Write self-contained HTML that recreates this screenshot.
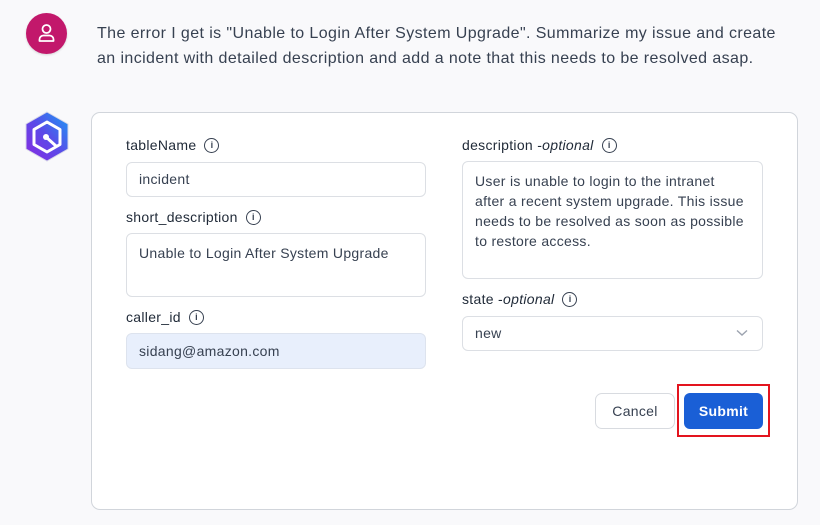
<!DOCTYPE html>
<html><head><style>
*{box-sizing:border-box;margin:0;padding:0}
body{width:820px;height:525px;background:#f9f9fb;font-family:"Liberation Sans",sans-serif;position:relative;overflow:hidden;color:#1f2937;letter-spacing:.3px}
.a{position:absolute}
.lbl{position:absolute;font-size:14px;color:#1f2937;display:flex;align-items:center;height:18px}
.lbl i{font-style:italic}
.info{width:15px;height:15px;border:1.3px solid #374151;border-radius:50%;display:inline-flex;align-items:center;justify-content:center;font-size:9px;font-weight:bold;font-style:normal;color:#374151;margin-left:8px;letter-spacing:0}
.inp{position:absolute;background:#fff;border:1px solid #dcdfe4;border-radius:6px;font-size:14px;color:#374151;padding:0 12px}
</style></head><body>
<div class="a" style="left:26px;top:13px;width:41px;height:41px;border-radius:50%;background:#c2186b;box-shadow:0 1px 2px rgba(0,0,0,.15)">
<svg width="41" height="41" viewBox="0 0 41 41"><circle cx="20.5" cy="16" r="4" fill="none" stroke="#fff" stroke-width="1.8"/><path d="M13.5 28v-1.5a4 4 0 0 1 4-4h6a4 4 0 0 1 4 4V28z" fill="none" stroke="#fff" stroke-width="1.8" stroke-linejoin="round"/></svg></div>
<div class="a" style="left:97px;top:21px;font-size:16px;line-height:25px;color:#374151;width:700px;letter-spacing:.4px">The error I get is "Unable to Login After System Upgrade". Summarize my issue and create<br>an incident with detailed description and add a note that this needs to be resolved asap.</div>
<svg class="a" style="left:22px;top:110px" width="50" height="54" viewBox="0 0 50 54"><defs><linearGradient id="g" x1="1" y1="0" x2="0" y2="1"><stop offset="0" stop-color="#1a9cf5"/><stop offset=".5" stop-color="#5b4ae8"/><stop offset="1" stop-color="#8a2be2"/></linearGradient></defs><path d="M25 2 46 14v25L25 51 4 39V14z" fill="url(#g)" stroke="#d8d8e8" stroke-width="1"/><path d="M25 12 38 19.5v15L25 42 12 34.5v-15z" fill="none" stroke="#fff" stroke-width="3" stroke-linejoin="round"/><circle cx="24" cy="27" r="3" fill="#fff"/><path d="M24 27 34 36" stroke="#fff" stroke-width="3"/></svg>
<div class="a" style="left:91px;top:112px;width:707px;height:398px;background:#fff;border:1px solid #d1d5db;border-radius:9px"></div>
<div class="lbl" style="left:126px;top:136px">tableName<span class="info">i</span></div>
<div class="inp" style="left:126px;top:162px;width:300px;height:35px;line-height:33px">incident</div>
<div class="lbl" style="left:126px;top:208px">short_description<span class="info">i</span></div>
<div class="inp" style="left:126px;top:233px;width:300px;height:64px;padding-top:10px;line-height:18px">Unable to Login After System Upgrade</div>
<div class="lbl" style="left:126px;top:308px">caller_id<span class="info">i</span></div>
<div class="inp" style="left:126px;top:333px;width:300px;height:36px;line-height:34px;background:#e8effc;border-color:#dde3ee">sidang@amazon.com</div>
<div class="lbl" style="left:462px;top:136px">description -<i>optional</i><span class="info">i</span></div>
<div class="inp" style="left:462px;top:161px;width:301px;height:118px;padding-top:9px;line-height:20px">User is unable to login to the intranet<br>after a recent system upgrade. This issue<br>needs to be resolved as soon as possible<br>to restore access.</div>
<div class="lbl" style="left:462px;top:290px">state -<i>optional</i><span class="info">i</span></div>
<div class="inp" style="left:462px;top:316px;width:301px;height:35px;line-height:33px">new<svg class="a" style="right:14px;top:12px" width="12" height="8" viewBox="0 0 12 8"><path d="M1 1.5 6 6l5-4.5" fill="none" stroke="#9ca3af" stroke-width="1.4"/></svg></div>
<div class="a" style="left:595px;top:393px;width:80px;height:36px;border:1px solid #d8dbe0;border-radius:7px;background:#fff;font-size:14px;color:#374151;text-align:center;line-height:34px">Cancel</div>
<div class="a" style="left:684px;top:393px;width:79px;height:36px;border-radius:6px;background:#1a5fd6;font-size:14px;font-weight:bold;color:#fff;text-align:center;line-height:36px">Submit</div>
<div class="a" style="left:677px;top:384px;width:93px;height:53px;border:2.5px solid #e3141e"></div>
</body></html>
